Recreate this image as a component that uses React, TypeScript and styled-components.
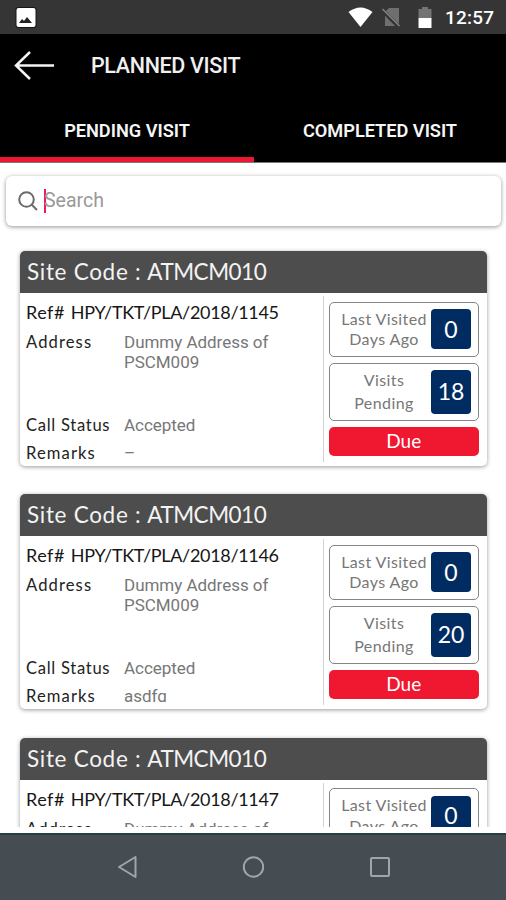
import React from "react";
import styled, { createGlobalStyle } from "styled-components";

const Global = createGlobalStyle`
  * { box-sizing: border-box; }
  body { margin: 0; background: #fff; }
`;

const Screen = styled.div`
  width: 506px;
  height: 900px;
  display: flex;
  flex-direction: column;
  overflow: hidden;
  background: #fff;
  font-family: Lato, "Open Sans", sans-serif;
`;

const StatusBar = styled.div`
  height: 34px;
  flex: none;
  display: flex;
  align-items: center;
  background: #353535;
  padding: 0 11px 0 14px;
`;

const StatusIcons = styled.div`
  margin-left: auto;
  display: flex;
  align-items: center;
`;

const WifiIcon = styled.svg`
  margin-right: 8px;
`;

const Clock = styled.span`
  width: 50px;
  margin-left: 12px;
  padding-top: 2px;
  font: 500 19px/22px Roboto, sans-serif;
  letter-spacing: 0.2px;
  color: #fff;
  white-space: nowrap;
`;

const AppBar = styled.header`
  height: 64px;
  flex: none;
  display: flex;
  align-items: center;
  background: #000;
  padding-left: 14px;
`;

const Title = styled.h1`
  margin: 0 0 0 36px;
  font: 500 21.5px/28px Roboto, sans-serif;
  letter-spacing: -0.35px;
  color: #f0f0f0;
`;

const Tabs = styled.nav`
  height: 65px;
  flex: none;
  display: grid;
  grid-template-columns: 254px 1fr;
  background: #000;
  border-bottom: 1px solid #777;
`;

const Tab = styled.button<{ $active?: boolean }>`
  border: 0;
  border-bottom: 5px solid ${(p) => (p.$active ? "#ee1631" : "#000")};
  padding: 6px 0 0;
  background: #000;
  color: #f6f6f6;
  font: 600 18.2px/24px Roboto, sans-serif;
  letter-spacing: -0.02px;
`;

const SearchBox = styled.label`
  height: 50px;
  flex: none;
  margin: 13px 5px 0 6px;
  display: flex;
  align-items: center;
  padding-left: 12px;
  background: #fff;
  border-radius: 6px;
  box-shadow: 0 1px 4px rgba(0, 0, 0, 0.42);
`;

const Caret = styled.span`
  width: 2px;
  height: 24px;
  margin-left: 6px;
  background: #ec1c5c;
`;

const Placeholder = styled.span`
  margin-left: -2px;
  font: 400 19.5px/26px Roboto, sans-serif;
  color: #999;
`;

const List = styled.main`
  height: 601px;
  flex: none;
  padding: 25px 19px 0 20px;
  display: flex;
  flex-direction: column;
  gap: 28.3px;
  overflow: hidden;
`;

const Card = styled.article`
  height: 215px;
  flex: none;
  border-radius: 5px;
  background: #fff;
  box-shadow: 0 1px 4px rgba(0, 0, 0, 0.4);
`;

const CardHeader = styled.h2`
  margin: 0;
  height: 42px;
  padding-left: 7px;
  display: flex;
  gap: 6px;
  border-radius: 5px 5px 0 0;
  background: #4d4d4d;
  color: #f3f3f3;
  font-weight: 400;
  font-size: 22.5px;
  line-height: 42px;
  letter-spacing: 0.7px;
  white-space: nowrap;
`;

const SiteCode = styled.span`
  letter-spacing: -0.5px;
`;

const CardBody = styled.div`
  height: 173px;
  padding: 3px 8.5px 4px 6px;
  display: grid;
  grid-template-columns: 297px 1fr;
`;

const Details = styled.div`
  height: 163px;
  overflow: hidden;
`;

const Ref = styled.div`
  display: flex;
  gap: 6px;
  padding-top: 4px;
  font-size: 18px;
  line-height: 24px;
  color: #161616;
  letter-spacing: 0.5px;
  white-space: nowrap;
`;

const Ticket = styled.span`
  letter-spacing: -0.32px;
`;

const Field = styled.div<{ $height: number }>`
  height: ${(p) => p.$height}px;
  display: grid;
  grid-template-columns: 98px 165px;
`;

const Label = styled.span<{ $spacing: number }>`
  font-size: 16.6px;
  line-height: 20px;
  color: #222;
  letter-spacing: ${(p) => p.$spacing}px;
  white-space: nowrap;
`;

const Value = styled.span`
  font: 400 17px/20px Roboto, sans-serif;
  letter-spacing: -0.03px;
  color: #777;
`;

const FieldList = styled.div`
  padding-top: 8px;
`;

const Summary = styled.aside`
  border-left: 1px solid #d2d2d2;
  height: 166px;
  margin-left: -0.5px;
  padding: 5.500px 0 0 5.500px;
  display: flex;
  flex-direction: column;
`;

const Stat = styled.div<{ $tall?: boolean }>`
  height: ${(p) => (p.$tall ? 58 : 55)}px;
  margin-bottom: 6px;
  flex: none;
  display: flex;
  align-items: center;
  border: 1px solid #858585;
  border-radius: 5px;
  padding: 0 6.500px 0 7px;
`;

const StatLabel = styled.span<{ $tall?: boolean }>`
  flex: 1;
  text-align: center;
  font-size: 16px;
  line-height: ${(p) => (p.$tall ? 22.5 : 20.5)}px;
  letter-spacing: 0.4px;
  color: #777;
  white-space: pre-line;
`;

const Badge = styled.span<{ $tall?: boolean }>`
  width: 40px;
  height: ${(p) => (p.$tall ? 44 : 40)}px;
  border-radius: 4px;
  padding-bottom: 1px;
  background: #012c62;
  color: #fff;
  display: grid;
  place-items: center;
  font-size: 23px;
`;

const DueButton = styled.button`
  height: 29px;
  border: 0;
  border-radius: 5px;
  padding: 0;
  background: #f01730;
  color: #fff;
  font: 400 19px/28px Lato, sans-serif;
`;

const NavBar = styled.footer`
  margin-top: 6px;
  flex: 1;
  display: grid;
  grid-template-columns: repeat(3, 126.5px);
  justify-content: center;
  justify-items: center;
  align-items: center;
  padding-bottom: 2px;
  background: #454d52;
  border-top: 2px solid #25403e;
`;

const visits = [
  { ref: "1145", remarks: "–", pending: 18 },
  { ref: "1146", remarks: "asdfg", pending: 20 },
  { ref: "1147", remarks: "–", pending: 20 },
];

function VisitCard({ visit }: { visit: (typeof visits)[number] }) {
  return (
    <Card>
      <CardHeader>
        <span>Site Code :</span>
        <SiteCode>ATMCM010</SiteCode>
      </CardHeader>
      <CardBody>
        <Details>
          <Ref>
            <span>Ref#</span>
            <Ticket>HPY/TKT/PLA/2018/{visit.ref}</Ticket>
          </Ref>
          <FieldList>
            <Field $height={82.5}>
              <Label $spacing={1.1}>Address</Label>
              <Value>Dummy Address of PSCM009</Value>
            </Field>
            <Field $height={28.5}>
              <Label $spacing={0.7}>Call Status</Label>
              <Value>Accepted</Value>
            </Field>
            <Field $height={28}>
              <Label $spacing={1.1}>Remarks</Label>
              <Value>{visit.remarks}</Value>
            </Field>
          </FieldList>
        </Details>
        <Summary>
          <Stat>
            <StatLabel>{"Last Visited\nDays Ago"}</StatLabel>
            <Badge>0</Badge>
          </Stat>
          <Stat $tall>
            <StatLabel $tall>{"Visits\nPending"}</StatLabel>
            <Badge $tall>{visit.pending}</Badge>
          </Stat>
          <DueButton>Due</DueButton>
        </Summary>
      </CardBody>
    </Card>
  );
}

export default function App() {
  return (
    <Screen>
      <Global />
      <StatusBar>
        <svg width="24" height="24" viewBox="0 0 24 24">
          <rect x="1.500" y="2" width="21" height="21" rx="3" fill="#161616" />
          <rect x="2.500" y="3" width="19" height="19" rx="2" fill="#fff" />
          <path d="M5 18l3-4 2 2 3-4 5 6z" fill="#222" />
        </svg>
        <StatusIcons>
          <WifiIcon width="25" height="22" viewBox="0 0 25 22">
            <path d="M0.500 6Q12.500-3 24.500 6L12.500 21z" fill="#fff" />
          </WifiIcon>
          <svg width="22" height="22" viewBox="0 0 22 22">
            <path d="M8 2h10v18H4V6z" fill="#6f6f6f" />
            <path d="M1 4l17 17" stroke="#353535" strokeWidth="4" />
            <path d="M1.500 3l17 17" stroke="#858585" strokeWidth="1.500" />
          </svg>
          <svg width="30" height="24" viewBox="0 0 30 24">
            <path d="M15.500 4h3.500V2h6v2h3.500v9H15.500z" fill="#747474" />
            <path d="M15.500 13h13v10H15.500z" fill="#fff" />
          </svg>
          <Clock>12:57</Clock>
        </StatusIcons>
      </StatusBar>
      <AppBar>
        <svg width="41" height="30" viewBox="0 0 41 30" fill="none" stroke="#f3f3f3" strokeWidth="2.500">
          <path d="M40 14.500H2M16 1L2 14.500l14 13.500" />
        </svg>
        <Title>PLANNED VISIT</Title>
      </AppBar>
      <Tabs>
        <Tab $active>PENDING VISIT</Tab>
        <Tab>COMPLETED VISIT</Tab>
      </Tabs>
      <SearchBox>
        <svg width="20" height="20" viewBox="0 0 20 20" fill="none" stroke="#6b6b6b" strokeWidth="2">
          <circle cx="8.500" cy="8.500" r="7.300" />
          <path d="M13.500 13.500L19 19" />
        </svg>
        <Caret />
        <Placeholder>Search</Placeholder>
      </SearchBox>
      <List>
        {visits.map((v) => (
          <VisitCard key={v.ref} visit={v} />
        ))}
      </List>
      <NavBar>
        <svg width="22" height="22" viewBox="0 0 22 22" fill="none" stroke="#9fa6a8" strokeWidth="2" strokeLinejoin="round">
          <path d="M19.500 1v20L3 11z" />
        </svg>
        <svg width="22" height="22" viewBox="0 0 22 22" fill="none" stroke="#9fa6a8" strokeWidth="2">
          <circle cx="11.500" cy="11" r="9.700" />
        </svg>
        <svg width="22" height="22" viewBox="0 0 22 22" fill="none" stroke="#9fa6a8" strokeWidth="2">
          <rect x="2" y="2" width="18" height="18" rx="1" />
        </svg>
      </NavBar>
    </Screen>
  );
}
